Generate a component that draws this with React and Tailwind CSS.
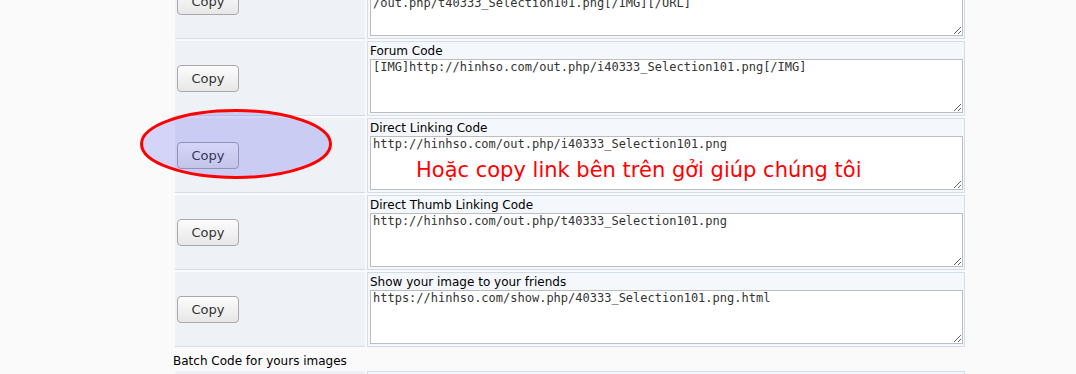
import React from "react";

const rows = [
  {
    label: "Thumbnail for forums",
    code: "[URL=http://hinhso.com/40333_Selection101.png.html][IMG]http://hinhso.com\n/out.php/t40333_Selection101.png[/IMG][/URL]",
  },
  {
    label: "Forum Code",
    code: "[IMG]http://hinhso.com/out.php/i40333_Selection101.png[/IMG]",
  },
  {
    label: "Direct Linking Code",
    code: "http://hinhso.com/out.php/i40333_Selection101.png",
  },
  {
    label: "Direct Thumb Linking Code",
    code: "http://hinhso.com/out.php/t40333_Selection101.png",
  },
  {
    label: "Show your image to your friends",
    code: "https://hinhso.com/show.php/40333_Selection101.png.html",
  },
];

const sans = { fontFamily: '"DejaVu Sans", Verdana, sans-serif' };
const mono = { fontFamily: '"DejaVu Sans Mono", monospace' };

function CodeRow({ label, code }) {
  return (
    <div className="flex h-[75px] gap-[2px]">
      {/* copy button cell */}
      <div className="flex w-[190px] items-center border-b border-[#d3dde9] bg-[#eef1f6] pl-[2px]">
        <button
          className="h-[27px] w-[62px] rounded-[4px] border border-[#a9a9a9] bg-linear-to-b from-[#fcfcfc] to-[#e7e7e7] pt-[1px] text-[13px] text-[#333]"
          style={sans}
        >
          Copy
        </button>
      </div>
      {/* code cell */}
      <div className="flex w-[598px] flex-col border border-[#d3dde9] bg-[#f4f7fb] pl-[2px] pr-[1px]">
        <div className="h-[17px] pt-[1px] text-[12px] leading-[17px] text-black" style={sans}>
          {label}
        </div>
        <textarea
          readOnly
          defaultValue={code}
          className="h-[54px] w-full border border-[#bdbdbd] bg-white px-[2px] pt-[1px] text-[12px] leading-[13px] text-[#333]"
          style={mono}
        />
      </div>
    </div>
  );
}

export default function App() {
  return (
    <div className="relative h-[374px] overflow-hidden bg-[#fafafa]">
      <div className="ml-[175px] mt-[-36px] flex w-[790px] flex-col">
        <div className="flex flex-col gap-[2px]">
          {rows.map((row, i) => (
            <CodeRow key={i} {...row} />
          ))}
        </div>
        <div className="-ml-[2px] flex h-[24px] items-center pt-[3px] text-[12px] text-black" style={sans}>
          Batch Code for yours images
        </div>
        <CodeRow label="BBCode" code="" />
      </div>

      {/* annotation overlay */}
      <svg
        className="absolute left-[139px] top-[108px]"
        width="194"
        height="72"
        viewBox="0 0 194 72"
      >
        <ellipse
          cx="97"
          cy="36"
          rx="94.5"
          ry="33.5"
          fill="#3c3cf0"
          fillOpacity="0.2"
          stroke="#ff0000"
          strokeWidth="3"
        />
      </svg>
      <div
        className="absolute left-[416px] top-[160px] whitespace-nowrap text-[21px] leading-none text-[#ff0000]"
        style={sans}
      >
        Hoặc copy link bên trên gởi giúp chúng tôi
      </div>
    </div>
  );
}
